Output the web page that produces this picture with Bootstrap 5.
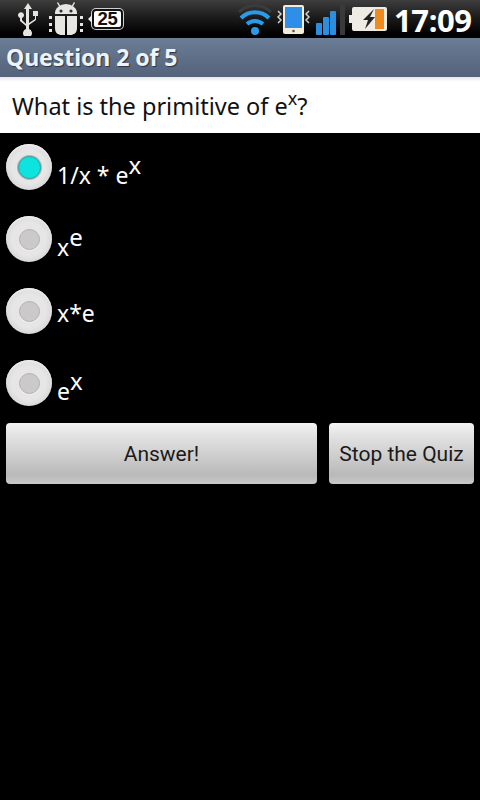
<!DOCTYPE html>
<html lang="en">
<head>
<meta charset="utf-8">
<title>Quiz</title>
<link href="https://cdn.jsdelivr.net/npm/bootstrap@5.3.0/dist/css/bootstrap.min.css" rel="stylesheet">
<style>
html,body{background:#000;margin:0;height:100%}
body{font-family:"Noto Sans","Open Sans",sans-serif;color:#fff;width:480px;height:800px;overflow:hidden}
.sbar{height:38px;background:linear-gradient(#3e3e3e,#1c1c1c 45%,#000 90%);padding-left:16px}
.sbar svg{display:block;flex:none}
.ic-bug{margin-left:8px}
.ic-wifi{margin-left:114px}
.ic-phone{margin-left:2px}
.ic-sig{margin-left:3px}
.ic-bat{margin-left:2px}
.s-badge{width:31px;height:20px;position:relative;background:#fff;border:2px solid #111;border-radius:4px;color:#111;font:700 18.5px/16px "Liberation Sans",sans-serif;text-align:center;margin-left:8px;margin-top:-1px;letter-spacing:-.2px;box-shadow:0 0 0 1px #cfcfcf}
.s-badge::before{content:"";position:absolute;left:-6px;top:4px;border:4px solid transparent;border-left-width:0;border-right:4px solid #eee}
.s-time{font:700 31px/34px "Noto Sans",sans-serif;width:78px;margin-left:6px;margin-top:2px;white-space:nowrap;letter-spacing:-.4px}
.tbar{height:39px;background:linear-gradient(#6b7d97,#5d6d85 60%,#54637a);padding-left:6px;font-size:23.1px;line-height:38px;font-weight:700;color:#eef3f7;text-shadow:1px 1px 1px #2b3442;letter-spacing:-.1px}
.qbox{height:56px;background:linear-gradient(#e8e8e8,#fff 5px);color:#111;font-size:23.5px;padding-left:12px;line-height:58px;white-space:nowrap}
.qbox sup{font-size:18px;top:-.55em;line-height:0;vertical-align:baseline;position:relative}
.opts{padding:11px 0 0 6px}
.opt{height:72px;gap:5px}
.rad{width:46px;height:46px;flex:none;border-radius:50%;background:radial-gradient(circle at 50% 50%,#e6e6e6 0,#e6e6e6 52%,#d6d6d6 75%,#cacaca 100%);box-shadow:inset 0 2px 2px #ececec}
.rad-in{width:21px;height:21px;border-radius:50%;background:#cbc9c9;border:1px solid #b2b0b0;box-shadow:0 1px 0 #f2f2f2}
.rad-on{width:23px;height:23px;background:#0de4e0;border:1px solid #3f9c9c;box-shadow:0 0 0 1px #a8b8b8}
.lbl{font-size:23px;line-height:30px;color:#fff;white-space:nowrap;margin-top:10px}
.lbl-raised{margin-top:16px}
.lbl sup{font-size:24px;top:-.42em;line-height:0;vertical-align:baseline;position:relative}
.acts{padding:0 6px;gap:12px;margin-top:-9px}
.qbtn{height:61px;background:linear-gradient(#f4f4f4,#e4e4e4 18%,#cbcbcb 58%,#b9b9b9 85%,#c9c9c9);color:#1a1a1a;border:0;border-radius:4px;font:400 21px/1.2 Roboto,sans-serif;padding:3px 0 0;white-space:nowrap}
.qbtn-a{width:311px}
.qbtn-b{width:145px}
</style>
</head>
<body>
<div class="sbar d-flex align-items-center">
  <svg width="24" height="34" viewBox="0 0 24 34" aria-label="usb"><path d="M12 1l4 6h-3v14l6-4v-3h-2v-5h5v5h-2v4l-7 5v4a4.500 4.500 0 1 1-3 0v-3l-6-5v-3a3 3 0 1 1 2 0v2l4 4V7H8z" fill="#e6e4e0"/></svg>
  <svg class="ic-bug" width="36" height="36" viewBox="0 0 36 36" aria-label="bug"><g fill="#e8e6e2"><path d="M7 12a11 9 0 0 1 22 0v1H7z"/><path d="M7 15h10v19h-3c-4 0-7-2-7-7zM19 15h10v12c0 5-3 7-7 7h-3z"/><path d="M10 1l3 5-1 1-3-5zM26 1l-3 5 1 1 3-5z"/><rect x="1" y="15" width="3" height="3"/><rect x="1" y="22" width="3" height="3"/><rect x="1" y="28" width="3" height="3"/><rect x="32" y="15" width="3" height="3"/><rect x="32" y="22" width="3" height="3"/><rect x="32" y="28" width="3" height="3"/></g><circle cx="13" cy="10" r="1.600" fill="#333"/><circle cx="23" cy="10" r="1.600" fill="#333"/></svg>
  <div class="s-badge">25</div>
  <svg class="ic-wifi" width="36" height="31" viewBox="0 0 36 31" aria-label="wifi"><path d="M2 8a23 23 0 0 1 32 0" fill="none" stroke="#3b3b3b" stroke-width="3"/><path d="M4 14a20 20 0 0 1 28 0" fill="none" stroke="#2a9be8" stroke-width="4"/><path d="M10 20a12 12 0 0 1 16 0" fill="none" stroke="#2a9be8" stroke-width="4"/><circle cx="18" cy="27" r="4" fill="#2a9be8"/></svg>
  <svg class="ic-phone" width="37" height="34" viewBox="0 0 37 34" aria-label="phone"><path d="M3 9l3 3-3 3 3 3-3 3M34 9l-3 3 3 3-3 3 3 3" fill="none" stroke="#cfcfcf" stroke-width="1.500"/><rect x="8" y="3" width="21" height="29" rx="2" fill="#f4ecd8"/><rect x="10" y="5" width="17" height="21" fill="#2f8fe8"/><circle cx="18.500" cy="29" r="1.300" fill="#555"/></svg>
  <svg class="ic-sig" width="32" height="32" viewBox="0 0 32 32" aria-label="signal"><rect x="1" y="20" width="6" height="12" rx="1" fill="#2a8fe0"/><rect x="8" y="14" width="6" height="18" rx="1" fill="#2a8fe0"/><rect x="15" y="8" width="6" height="24" rx="1" fill="#2a8fe0"/><rect x="25" y="2" width="5" height="30" fill="#3a3a3a"/></svg>
  <svg class="ic-bat" width="39" height="26" viewBox="0 0 39 26" aria-label="battery"><path d="M5 1h31a2 2 0 0 1 2 2v20a2 2 0 0 1-2 2H5a2 2 0 0 1-2-2v-6H0V9h3V3a2 2 0 0 1 2-2z" fill="#efece4"/><rect x="26" y="3" width="9" height="20" fill="#ef8a1e"/><path d="M25 3L14 14h5l-3 9 10-12h-5z" fill="#222"/></svg>
  <div class="s-time">17:09</div>
</div>
<div class="tbar">Question 2 of 5</div>
<div class="qbox">What is the primitive of e<sup>x</sup>?</div>
<div class="opts">
  <div class="opt d-flex align-items-start"><div class="rad d-flex align-items-center justify-content-center"><div class="rad-in rad-on"></div></div><div class="lbl lbl-raised">1/x * e<sup>x</sup></div></div>
  <div class="opt d-flex align-items-start"><div class="rad d-flex align-items-center justify-content-center"><div class="rad-in"></div></div><div class="lbl lbl-raised">x<sup>e</sup></div></div>
  <div class="opt d-flex align-items-start"><div class="rad d-flex align-items-center justify-content-center"><div class="rad-in"></div></div><div class="lbl">x*e</div></div>
  <div class="opt d-flex align-items-start"><div class="rad d-flex align-items-center justify-content-center"><div class="rad-in"></div></div><div class="lbl lbl-raised">e<sup>x</sup></div></div>
</div>
<div class="acts d-flex">
  <button type="button" class="btn qbtn qbtn-a">Answer!</button>
  <button type="button" class="btn qbtn qbtn-b">Stop the Quiz</button>
</div>
<script src="https://cdn.jsdelivr.net/npm/bootstrap@5.3.0/dist/js/bootstrap.bundle.min.js"></script>
</body>
</html>
